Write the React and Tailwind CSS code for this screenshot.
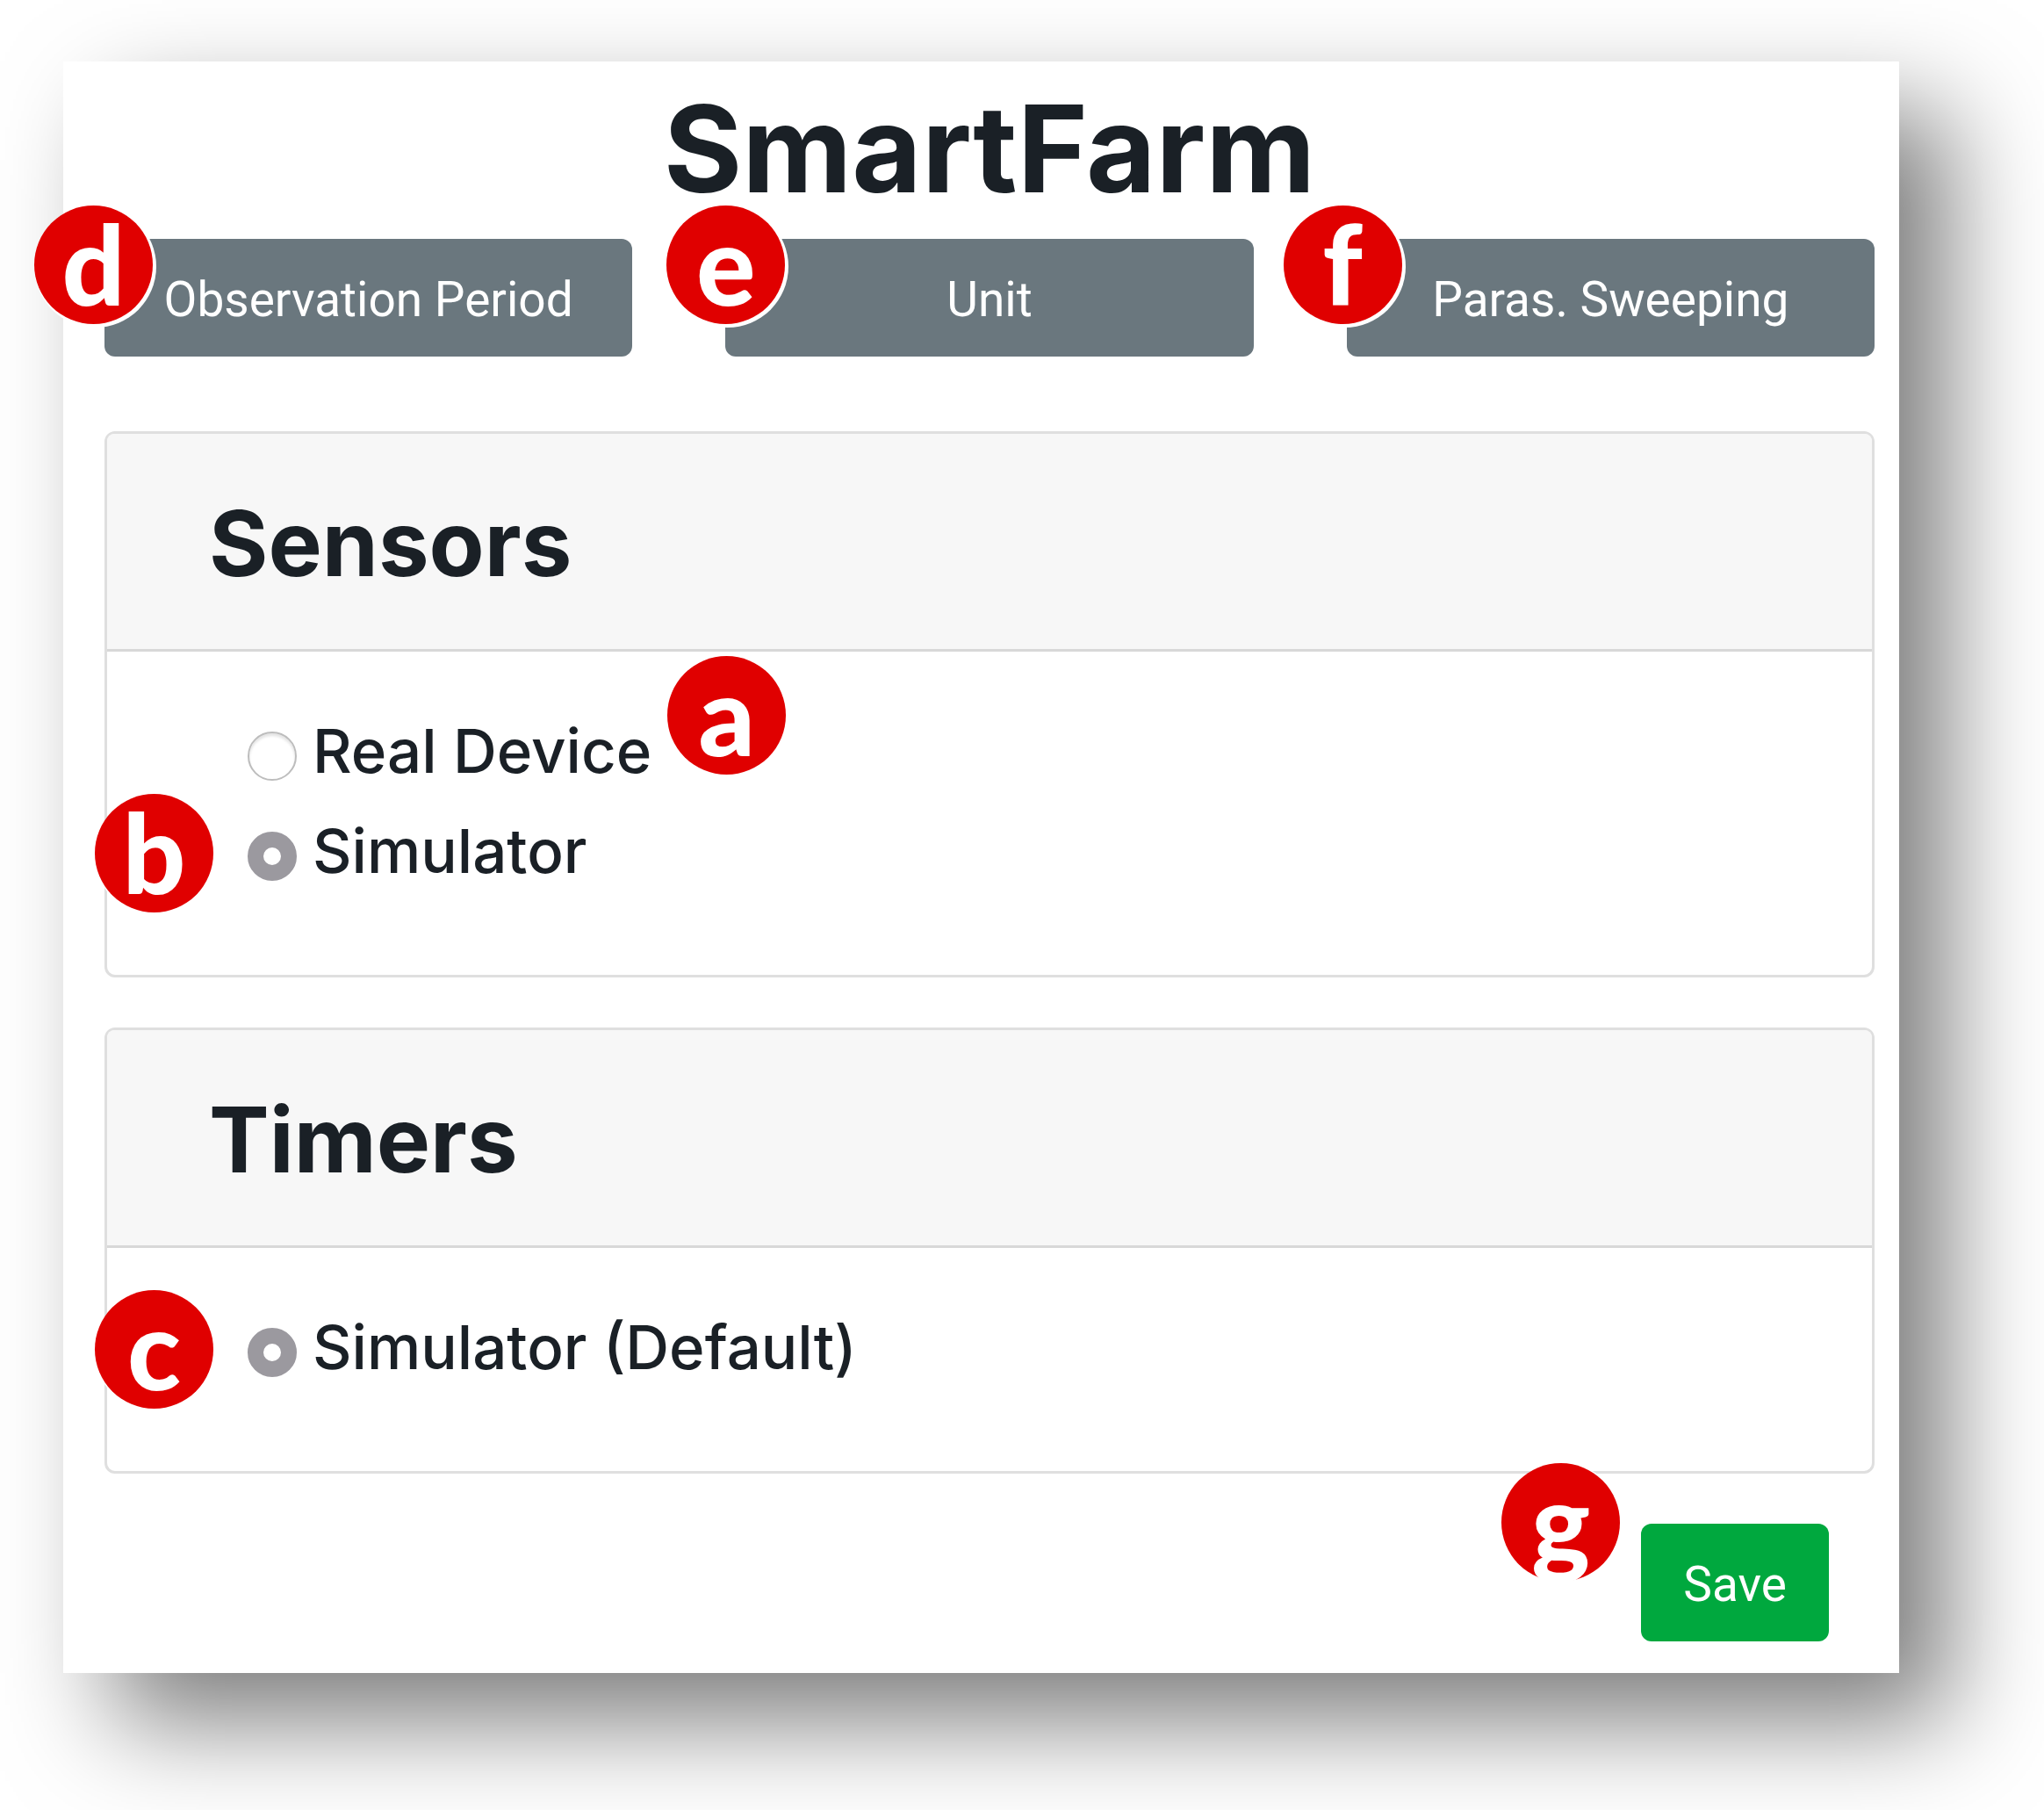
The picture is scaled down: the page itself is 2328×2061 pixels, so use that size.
import { useState } from 'react';

const SETTINGS = [
    { id: 'period', label: 'Observation Period', marker: 'd', place: '-left-20' },
    { id: 'unit', label: 'Unit', marker: 'e', place: '-left-[67px]' },
    { id: 'sweeping', label: 'Paras. Sweeping', marker: 'f', place: '-left-18' },
];

function Marker({ letter, className }) {
    return (
        <span
            className={`absolute z-10 flex size-[135px] items-center justify-center rounded-full bg-[#e00000] pb-1 font-['Lato',sans-serif] text-[126px] leading-none font-black text-white shadow-[2px_2px_0_2px_white] ${className}`}
        >
            {letter}
        </span>
    );
}

function Panel({ title, children }) {
    return (
        <section className="rounded-xl border-3 border-[#dfdfdf]">
            <header className="rounded-t-lg border-b-3 border-[#d8d8d8] bg-[#f7f7f7] pt-[65px] pb-15 pl-29">
                <h2 className="text-[103px] leading-[120px] font-bold">{title}</h2>
            </header>
            <div className="pt-14 pb-21 pl-40">{children}</div>
        </section>
    );
}

function RadioRow({ id, name, label, checked, onChange, children }) {
    return (
        <div className="relative flex h-[114px] w-fit items-center gap-[18px]">
            <input
                id={id}
                type="radio"
                name={name}
                checked={checked}
                onChange={onChange}
                className="mt-3 size-14 shrink-0 appearance-none rounded-full border-2 border-[#bdbdbd] bg-white shadow-[inset_0_3px_3px_#e4e4e4] checked:border-[18px] checked:border-[#9b999f] checked:shadow-none"
            />
            <label htmlFor={id} className="text-[69px] leading-none font-medium whitespace-nowrap">
                {label}
            </label>
            {children}
        </div>
    );
}

export default function App() {
    const [sensor, setSensor] = useState('simulator');
    const [timer, setTimer] = useState('simulator');

    return (
        <div className="overflow-hidden bg-white pt-[70px] pr-[165px] pb-[157px] pl-18 font-['Inter',sans-serif] text-[#1a2026]">
            <main className="bg-white pt-8 pr-7 pb-9 pl-[47px] shadow-[56px_56px_112px_rgba(0,0,0,0.51)]">
                <h1 className="text-center text-[137px] leading-[134px] font-bold">SmartFarm</h1>

                <div className="mt-9 grid grid-cols-3 gap-[106px]">
                    {SETTINGS.map((item) => (
                        <div key={item.id} className="relative">
                            <button
                                type="button"
                                className="h-[134px] w-full rounded-xl bg-[#6a777e] pt-1 font-['Roboto',sans-serif] text-[55px] whitespace-nowrap text-white"
                            >
                                {item.label}
                            </button>
                            <Marker letter={item.marker} className={`-top-[38px] ${item.place}`} />
                        </div>
                    ))}
                </div>

                <div className="mt-[85px] space-y-[57px]">
                    <Panel title="Sensors">
                        <RadioRow
                            id="sensor-real"
                            name="sensor"
                            label="Real Device"
                            checked={sensor === 'real'}
                            onChange={() => setSensor('real')}
                        >
                            <Marker letter="a" className="-top-[51px] left-full ml-[18px]" />
                        </RadioRow>
                        <RadioRow
                            id="sensor-simulator"
                            name="sensor"
                            label="Simulator"
                            checked={sensor === 'simulator'}
                            onChange={() => setSensor('simulator')}
                        >
                            <Marker letter="b" className="-top-2 -left-[174px]" />
                        </RadioRow>
                    </Panel>

                    <Panel title="Timers">
                        <RadioRow
                            id="timer-simulator"
                            name="timer"
                            label="Simulator (Default)"
                            checked={timer === 'simulator'}
                            onChange={() => setTimer('simulator')}
                        >
                            <Marker letter="c" className="-top-2 -left-[174px]" />
                        </RadioRow>
                    </Panel>
                </div>

                <div className="mt-[57px] flex justify-end pr-13">
                    <div className="relative">
                        <button
                            type="button"
                            className="h-[134px] rounded-xl bg-[#00a83e] px-12 pt-1 font-['Roboto',sans-serif] text-[55px] text-white"
                        >
                            Save
                        </button>
                        <Marker letter="g" className="-top-[69px] -left-[159px]" />
                    </div>
                </div>
            </main>
        </div>
    );
}
